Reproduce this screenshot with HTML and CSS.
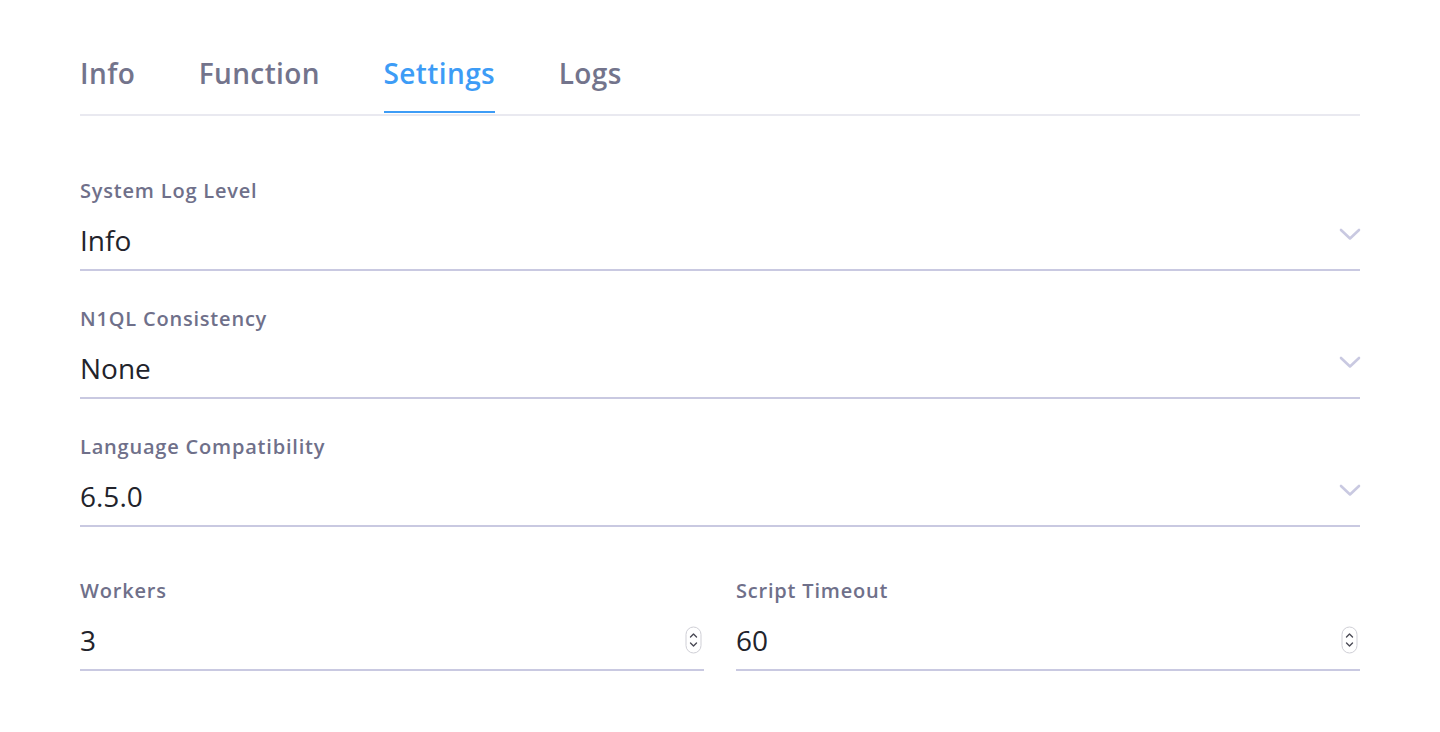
FILE: index.html
```html
<!DOCTYPE html>
<html>
<head>
<meta charset="utf-8">
<link rel="stylesheet" href="styles.css">
</head>
<body>
<div class="page">
  <nav class="tabs">
    <div class="tab">Info</div>
    <div class="tab">Function</div>
    <div class="tab active">Settings</div>
    <div class="tab">Logs</div>
  </nav>
  <form class="form">
    <div class="field">
      <label class="label">System Log Level</label>
      <div class="control">
        <span class="value">Info</span>
        <svg class="chevron" width="22" height="13" viewBox="0 0 22 13"><path d="M2 2 L11 10.5 L20 2" fill="none" stroke="#c9c9e1" stroke-width="2.6" stroke-linecap="round" stroke-linejoin="round"/></svg>
      </div>
    </div>
    <div class="field">
      <label class="label">N1QL Consistency</label>
      <div class="control">
        <span class="value">None</span>
        <svg class="chevron" width="22" height="13" viewBox="0 0 22 13"><path d="M2 2 L11 10.5 L20 2" fill="none" stroke="#c9c9e1" stroke-width="2.6" stroke-linecap="round" stroke-linejoin="round"/></svg>
      </div>
    </div>
    <div class="field">
      <label class="label">Language Compatibility</label>
      <div class="control">
        <span class="value">6.5.0</span>
        <svg class="chevron" width="22" height="13" viewBox="0 0 22 13"><path d="M2 2 L11 10.5 L20 2" fill="none" stroke="#c9c9e1" stroke-width="2.6" stroke-linecap="round" stroke-linejoin="round"/></svg>
      </div>
    </div>
    <div class="row">
      <div class="field">
        <label class="label">Workers</label>
        <div class="control">
          <span class="value">3</span>
          <svg class="spin" width="17" height="28" viewBox="0 0 17 28"><rect x="1" y="1" width="15" height="26" rx="7.5" fill="#fff" stroke="#cfcfd6" stroke-width="1"/><path d="M5.5 11 L8.5 8 L11.5 11 M5.5 17 L8.5 20 L11.5 17" fill="none" stroke="#4a4a55" stroke-width="1.4" stroke-linecap="round" stroke-linejoin="round"/></svg>
        </div>
      </div>
      <div class="field">
        <label class="label">Script Timeout</label>
        <div class="control">
          <span class="value">60</span>
          <svg class="spin" width="17" height="28" viewBox="0 0 17 28"><rect x="1" y="1" width="15" height="26" rx="7.5" fill="#fff" stroke="#cfcfd6" stroke-width="1"/><path d="M5.5 11 L8.5 8 L11.5 11 M5.5 17 L8.5 20 L11.5 17" fill="none" stroke="#4a4a55" stroke-width="1.4" stroke-linecap="round" stroke-linejoin="round"/></svg>
        </div>
      </div>
    </div>
  </form>
</div>
</body>
</html>
```

FILE: styles.css
```css
html, body {
  margin: 0;
  padding: 0;
  background: #ffffff;
}
body {
  font-family: "Open Sans", "Lato", sans-serif;
}
.page {
  padding: 55px 80px 0 80px;
}
.tabs {
  display: flex;
  gap: 63.5px;
  border-bottom: 2px solid #e9e9f0;
}
.tab {
  font-size: 28px;
  font-weight: 600;
  line-height: 36px;
  letter-spacing: 0.4px;
  color: #73748c;
  padding-bottom: 20px;
  border-bottom: 2px solid transparent;
  margin-bottom: 1px;
}
.tab.active {
  color: #3d9cf6;
  border-bottom-color: #3d9cf6;
}
.form {
  display: flex;
  flex-direction: column;
  gap: 36px;
  margin-top: 63px;
}
.row {
  display: flex;
  gap: 32px;
  margin-top: 16px;
}
.row .field {
  flex: 1;
}
.field {
  display: flex;
  flex-direction: column;
  gap: 19px;
}
.label {
  font-size: 20px;
  font-weight: 600;
  line-height: 24px;
  letter-spacing: 0.8px;
  color: #6f708a;
}
.control {
  display: flex;
  align-items: center;
  justify-content: space-between;
  padding-bottom: 11px;
  border-bottom: 2px solid #c9c9e1;
}
.value {
  font-size: 28px;
  line-height: 36px;
  color: #22232b;
}
.chevron {
  margin-top: -12px;
  margin-right: -1px;
}
.spin {
  margin-right: 2px;
}
```
